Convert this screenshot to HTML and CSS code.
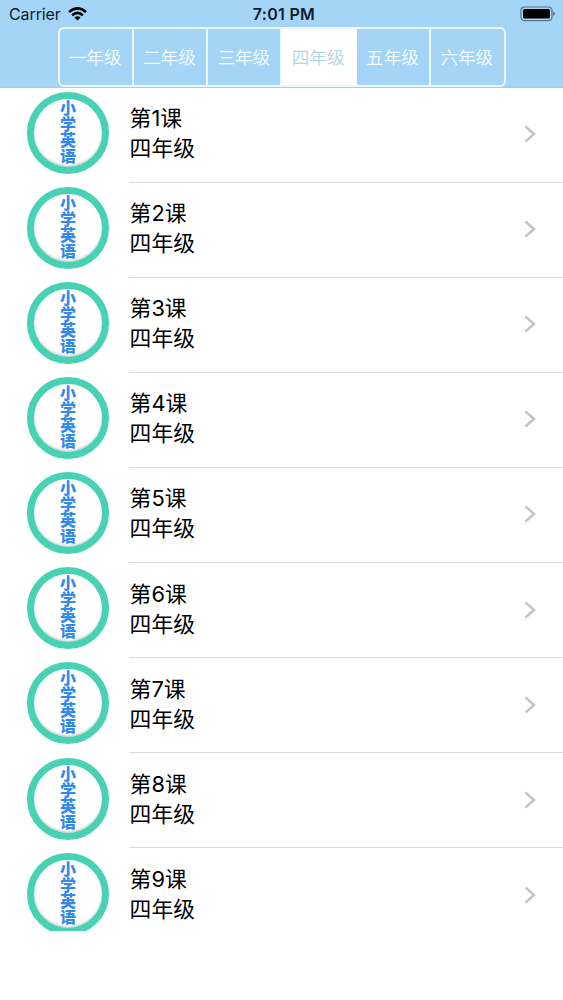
FILE: index.html
```
<!DOCTYPE html>
<html lang="zh-CN">

	<head>
		<meta charset="utf-8">
		<meta name="viewport" content="width=device-width,initial-scale=1">
		<title>小学英语</title>
		<link rel="stylesheet" href="styles.css">
	</head>

	<body>
		<header class="nav">
			<div class="status">
				<div class="carrier">
					<span>Carrier</span>
					<svg class="wifi" viewBox="0 0 19 14">
						<path d="M1 5.1Q9.5-2.3 18 5.1" />
						<path d="M4.1 8.2Q9.5 3.6 14.9 8.2" />
						<path class="dot" d="M6.4 10.4Q9.5 8 12.6 10.4L9.5 13.6Z" />
					</svg>
				</div>
				<div class="time">7:01 PM</div>
				<svg class="battery" viewBox="0 0 36 16">
					<rect class="shell" x="1" y="1" width="31" height="13.6" rx="3.5" />
					<rect x="3" y="3" width="27" height="9.6" rx="1.5" />
					<path class="cap" d="M33.2 5.5Q35 6 35 7.8T33.2 10.1Z" />
				</svg>
			</div>
			<div class="tabs">
				<div class="tab">一年级</div>
				<div class="tab">二年级</div>
				<div class="tab">三年级</div>
				<div class="tab active">四年级</div>
				<div class="tab">五年级</div>
				<div class="tab">六年级</div>
			</div>
		</header>

		<ul class="list" id="list"></ul>

		<script src="list.js"></script>
	</body>

</html>
```
FILE: styles.css
```
html,
body {
	margin: 0;
	background-color: #fff;
	font-family: Inter, "Noto Sans CJK SC", sans-serif;
	color: #000;
}

body {
	height: 1000px;
	overflow: hidden;
}

.nav {
	box-sizing: border-box;
	height: 88px;
	background-color: #a4d4f6;
	border-bottom: 1px solid #b5c9d7;
}

.status {
	display: grid;
	grid-template-columns: 1fr auto 1fr;
	align-items: center;
	box-sizing: border-box;
	height: 27px;
	padding: 1px 7px 0 9px;
	font-size: 16px;
	color: #101c2b;
}

.carrier {
	display: flex;
	align-items: center;
	gap: 7px;
	letter-spacing: -0.1px;
}

.wifi {
	width: 19px;
	height: 14px;
	margin-top: -1px;
	fill: none;
	stroke: #000;
	stroke-width: 2.5;
}

.wifi .dot {
	fill: #000;
	stroke: none;
}

.time {
	padding-left: 3px;
	font-weight: 600;
	letter-spacing: 0.3px;
}

.battery {
	justify-self: end;
	width: 36px;
	height: 16px;
	margin-top: -1px;
}

.battery .shell {
	fill: none;
	stroke: #587386;
	stroke-width: 1.2;
}

.battery .cap {
	fill: #587386;
}

.tabs {
	display: flex;
	box-sizing: border-box;
	width: 448px;
	height: 60px;
	margin: 0 auto;
	border: 2px solid #ebf8ff;
	border-radius: 6px;
	overflow: hidden;
}

.tab {
	flex: 1;
	display: flex;
	align-items: center;
	justify-content: center;
	box-sizing: border-box;
	padding: 0 1px 2px 0;
	border-left: 2px solid #ebf8ff;
	font-size: 17.6px;
	font-weight: 350;
	color: #f4fdff;
}

.tab:first-child {
	border-left: 0;
}

.tab.active {
	background-color: #fff;
	color: #b1d4e6;
}

.tab.active + .tab {
	border-left-color: #fff;
}

/* the list stops above the home area, the last row is cut there */
.list {
	height: 842.5px;
	margin: 0;
	padding: 0;
	list-style: none;
	overflow: hidden;
}

.row {
	display: flex;
	height: 95.1px;
}

.row:first-child {
	height: 94.6px;
}

.badge {
	display: flex;
	align-items: center;
	justify-content: center;
	flex: none;
	box-sizing: border-box;
	width: 82px;
	height: 82px;
	margin: 4.4px 20px 0 27px;
	padding: 0 2px 2px 0;
	border: 7px solid #47d2b3;
	border-radius: 50%;
	box-shadow: inset 0 -2px 3px -1px #b9bfc5;
	font-size: 16px;
	font-weight: 900;
	line-height: 18px;
	color: #3289ee;
}

.badge span {
	writing-mode: vertical-rl;
}

.cell {
	flex: 1;
	display: flex;
	align-items: center;
	justify-content: space-between;
	box-sizing: border-box;
	padding: 0 27px 1px 0.6px;
	border-bottom: 1px solid #dcdcde;
}

.text {
	font-size: 21.8px;
	line-height: 30px;
	padding-bottom: 2px;
}

.arrow {
	width: 12px;
	height: 18px;
	fill: none;
	stroke: #c3c3c6;
	stroke-width: 2.4;
}
```
FILE: list.js
```
(function(doc) {
	var grade = "四年级";
	var html = "";
	for (var i = 1; i <= 9; i++) {
		html += '<li class="row">' +
			'<div class="badge"><span>小学英语</span></div>' +
			'<div class="cell">' +
			'<div class="text"><div>第' + i + '课</div><div>' + grade + '</div></div>' +
			'<svg class="arrow" viewBox="0 0 12 18"><path d="M1.5 1.5L10 9L1.5 16.5" /></svg>' +
			'</div></li>';
	}
	doc.getElementById("list").innerHTML = html;
}(document));
```
